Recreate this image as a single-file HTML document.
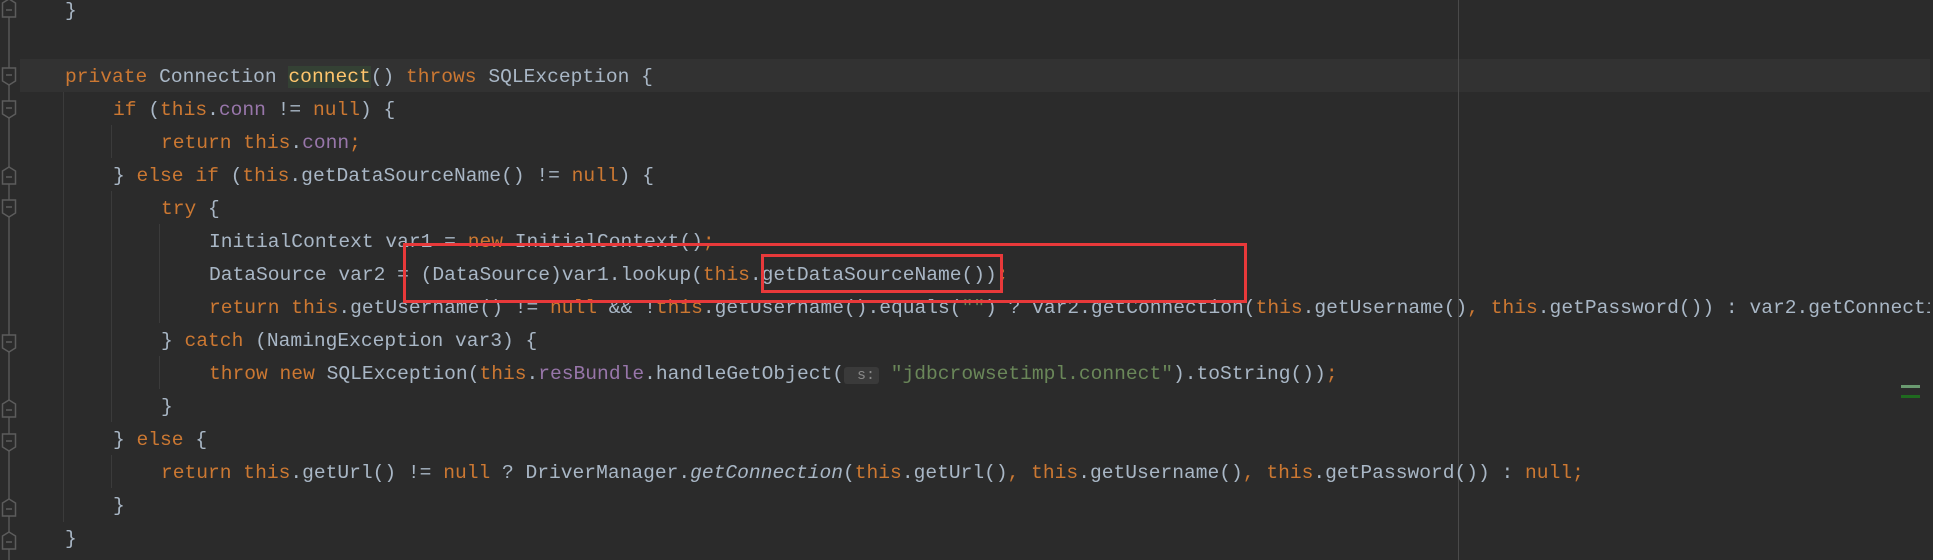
<!DOCTYPE html>
<html><head><meta charset="utf-8"><style>
html,body{margin:0;padding:0;background:#2b2b2b;width:1933px;height:560px;overflow:hidden;position:relative}
.ln{position:absolute;left:0;height:33px;line-height:33px;font-family:"Liberation Mono",monospace;font-size:19.6px;color:#a9b7c6;white-space:pre}
.k{color:#cc7832}.f{color:#9876aa}.s{color:#6a8759}.i{font-style:italic}
.cur{position:absolute;left:20px;right:0;top:59px;height:33px;background:#323232}
.g{position:absolute;width:1px;background:#3b3b3b}
.red{position:absolute;border:3px solid #e8393a;box-sizing:border-box}
</style></head><body>
<div class="cur"></div>
<div style="position:absolute;left:8px;top:0;width:2px;height:560px;background:#4b4b4b"></div>
<div style="position:absolute;left:1458px;top:0;width:1px;height:560px;background:#4a4a4a"></div>
<div class="g" style="left:63px;top:92px;height:430px"></div>
<div class="g" style="left:111px;top:125px;height:33px"></div>
<div class="g" style="left:111px;top:191px;height:231px"></div>
<div class="g" style="left:111px;top:455px;height:33px"></div>
<div class="g" style="left:159px;top:224px;height:99px"></div>
<div class="g" style="left:159px;top:356px;height:33px"></div>
<div style="position:absolute;left:1901px;top:385px;width:19px;height:3px;background:#6a9a70"></div>
<div style="position:absolute;left:1901px;top:395px;width:19px;height:3px;background:#1f6a1f"></div>

<svg width="20" height="560" style="position:absolute;left:0;top:0">
<g fill="#2b2b2b" stroke="#5c5c5c" stroke-width="1.5">
<path d="M2.5 3 L9 -1 L15.5 3 L15.5 17 L2.5 17 Z"/>
<path d="M2.5 68 L15.5 68 L15.5 81 L9 85 L2.5 81 Z"/>
<path d="M2.5 101 L15.5 101 L15.5 114 L9 118 L2.5 114 Z"/>
<path d="M2.5 171 L9 167 L15.5 171 L15.5 184 L2.5 184 Z"/>
<path d="M2.5 200 L15.5 200 L15.5 213 L9 217 L2.5 213 Z"/>
<path d="M2.5 335 L15.5 335 L15.5 348 L9 352 L2.5 348 Z"/>
<path d="M2.5 404 L9 400 L15.5 404 L15.5 417 L2.5 417 Z"/>
<path d="M2.5 434 L15.5 434 L15.5 447 L9 451 L2.5 447 Z"/>
<path d="M2.5 503 L9 499 L15.5 503 L15.5 516 L2.5 516 Z"/>
<path d="M2.5 536 L9 532 L15.5 536 L15.5 549 L2.5 549 Z"/>
</g>
<g stroke="#5c5c5c" stroke-width="1.5">
<path d="M6 10h6M6 75h6M6 108h6M6 177h6M6 207h6M6 342h6M6 410h6M6 441h6M6 509h6M6 542h6"/>
</g>
</svg>

<div class="ln" style="top:-5px;left:65px">}</div>
<div class="ln" style="top:61px;left:65px"><span class="k">private </span>Connection <span style="color:#ffc66d;background:#344134">connect</span>() <span class="k">throws </span>SQLException {</div>
<div class="ln" style="top:94px;left:113px"><span class="k">if </span>(<span class="k">this</span>.<span class="f">conn</span> != <span class="k">null</span>) {</div>
<div class="ln" style="top:127px;left:161px"><span class="k">return this</span>.<span class="f">conn</span><span class="k">;</span></div>
<div class="ln" style="top:160px;left:113px">} <span class="k">else if </span>(<span class="k">this</span>.getDataSourceName() != <span class="k">null</span>) {</div>
<div class="ln" style="top:193px;left:161px"><span class="k">try </span>{</div>
<div class="ln" style="top:226px;left:209px">InitialContext var1 = <span class="k">new </span>InitialContext()<span class="k">;</span></div>
<div class="ln" style="top:259px;left:209px">DataSource var2 = (DataSource)var1.lookup(<span class="k">this</span>.getDataSourceName())<span class="k">;</span></div>
<div class="ln" style="top:292px;left:209px"><span class="k">return this</span>.getUsername() != <span class="k">null </span>&amp;&amp; !<span class="k">this</span>.getUsername().equals(<span class="s">""</span>) ? var2.getConnection(<span class="k">this</span>.getUsername()<span class="k">, this</span>.getPassword()) : var2.getConnection()<span class="k">;</span></div>
<div class="ln" style="top:325px;left:161px">} <span class="k">catch </span>(NamingException var3) {</div>
<div class="ln" style="top:358px;left:209px"><span class="k">throw new </span>SQLException(<span class="k">this</span>.<span class="f">resBundle</span>.handleGetObject(<span style="background:#3a3a3a;color:#888;font-size:15px;padding:0 4px;border-radius:3px"> s:</span> <span class="s">"jdbcrowsetimpl.connect"</span>).toString())<span class="k">;</span></div>
<div class="ln" style="top:391px;left:161px">}</div>
<div class="ln" style="top:424px;left:113px">} <span class="k">else </span>{</div>
<div class="ln" style="top:457px;left:161px"><span class="k">return this</span>.getUrl() != <span class="k">null </span>? DriverManager.<span class="i">getConnection</span>(<span class="k">this</span>.getUrl()<span class="k">, this</span>.getUsername()<span class="k">, this</span>.getPassword()) : <span class="k">null;</span></div>
<div class="ln" style="top:490px;left:113px">}</div>
<div class="ln" style="top:523px;left:65px">}</div>

<div style="position:absolute;left:1930px;top:0;width:3px;height:560px;background:#2b2b2b"></div>
<div class="red" style="left:403px;top:243px;width:844px;height:60px"></div>
<div class="red" style="left:761px;top:254px;width:242px;height:39px"></div>
</body></html>
